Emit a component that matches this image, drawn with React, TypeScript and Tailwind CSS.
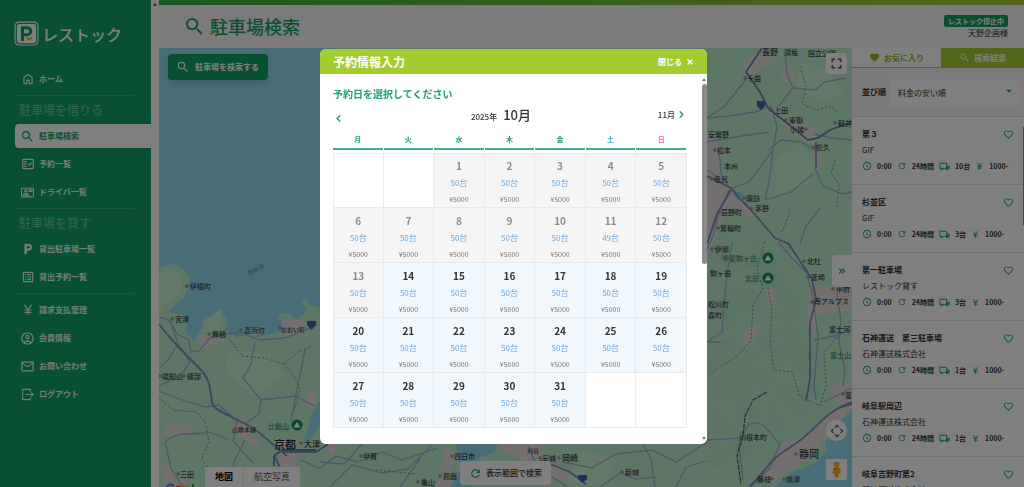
import { useState } from "react";
import type { ReactNode } from "react";
import {
  MdArrowDropDown,
  MdCurrencyYen,
  MdFavorite,
  MdFavoriteBorder,
  MdFullscreen,
  MdLocalParking,
  MdOutlineAccountCircle,
  MdOutlineContactMail,
  MdOutlineEmail,
  MdOutlineFactCheck,
  MdOutlineListAlt,
  MdOutlineLocalShipping,
  MdRefresh,
  MdSchedule,
  MdSearch,
} from "react-icons/md";
import { ChevronLeft, ChevronRight, ChevronsRight, X } from "lucide-react";

const HomeIcon = () => (
  <svg viewBox="0 -960 960 960" className="size-[14px]" fill="currentColor">
    <path d="M240-200h120v-240h240v240h120v-360L480-740 240-560v360Zm-80 80v-480l320-240 320 240v480H520v-240h-80v240H160Z" />
  </svg>
);

const LogoutIcon = () => (
  <svg viewBox="0 0 24 24" className="size-[13px]" fill="none" stroke="currentColor" strokeWidth="2">
    <path d="M17 7V2.500H3v19h14V17M9 12h13M18.500 8l4 4-4 4" />
  </svg>
);

const Logo = () => (
  <svg viewBox="0 0 50 50" className="size-[25px]">
    <rect x="1" y="1" width="48" height="48" rx="9" fill="#fff" />
    <rect x="4.500" y="4.500" width="41" height="41" rx="6" fill="none" stroke="#0ca263" strokeWidth="2.500" />
    <path d="M17 40V13.500h9.500a7 7 0 0 1 0 14H17" fill="none" stroke="#0ca263" strokeWidth="6" />
    <path d="M24 32c1 9 9 9 14 1-3-3-5-2-7 2-1-3-3-4-7-3z" fill="#e8cf1f" />
  </svg>
);

type NavItem = { label: string; icon: ReactNode; active?: boolean };

const navGroups: { heading?: string; items: NavItem[] }[] = [
  { items: [{ label: "ホーム", icon: <HomeIcon /> }] },
  {
    heading: "駐車場を借りる",
    items: [
      { label: "駐車場検索", icon: <MdSearch size={15} />, active: true },
      { label: "予約一覧", icon: <MdOutlineFactCheck size={14} /> },
      { label: "ドライバ一覧", icon: <MdOutlineContactMail size={13} /> },
    ],
  },
  {
    heading: "駐車場を貸す",
    items: [
      { label: "貸出駐車場一覧", icon: <MdLocalParking size={14} /> },
      { label: "貸出予約一覧", icon: <MdOutlineListAlt size={14} /> },
    ],
  },
  {
    items: [
      { label: "請求支払管理", icon: <MdCurrencyYen size={14} /> },
      { label: "会員情報", icon: <MdOutlineAccountCircle size={15} /> },
      { label: "お問い合わせ", icon: <MdOutlineEmail size={15} /> },
      { label: "ログアウト", icon: <LogoutIcon /> },
    ],
  },
];

const parkings = [
  { name: "第３", owner: "GIF", count: 10 },
  { name: "杉並区", owner: "GIF", count: 3 },
  { name: "第一駐車場", owner: "レストック貸す", count: 3 },
  { name: "石神運送　第三駐車場", owner: "石神運送株式会社", count: 1 },
  { name: "岐阜駅周辺", owner: "石神運送株式会社", count: 1 },
  { name: "岐阜吉野町第2", owner: "石神運送株式会社", count: 1 },
];

const weekdays = [
  { label: "月", color: "text-[#1fa26c]" },
  { label: "火", color: "text-[#1fa26c]" },
  { label: "水", color: "text-[#1fa26c]" },
  { label: "木", color: "text-[#1fa26c]" },
  { label: "金", color: "text-[#1fa26c]" },
  { label: "土", color: "text-[#57a5d6]" },
  { label: "日", color: "text-[#f0707c]" },
];

// October 2025 starts on a Wednesday
const weeks = Array.from({ length: 5 }, (_, w) =>
  Array.from({ length: 7 }, (_, d) => {
    const day = w * 7 + d - 1;
    return day >= 1 && day <= 31 ? day : null;
  })
);

// [label, x, y, size]
const places: [string, number, number, number][] = [
  ["伊根町", 190, 289, 7],
  ["宮津", 175, 322, 7],
  ["舞鶴", 212, 337, 7],
  ["高浜町", 244, 333, 7],
  ["おおい町", 281, 332, 6],
  ["福知山", 162, 379, 7],
  ["綾部", 187, 379, 7],
  ["大津", 304, 447, 8],
  ["三田", 180, 477, 7],
  ["山陰本線", 232, 432, 6],
  ["甲賀", 363, 459, 7],
  ["四日市", 454, 459, 7],
  ["亀山", 421, 485, 7],
  ["鈴鹿", 443, 479, 7],
  ["刈谷", 527, 453, 6],
  ["安城", 542, 461, 7],
  ["岡崎", 562, 461, 8],
  ["新城", 625, 475, 7],
  ["長野", 762, 55, 8],
  ["須坂", 784, 55, 7],
  ["国立公園", 808, 56, 7],
  ["千曲", 747, 81, 7],
  ["上田", 774, 113, 7],
  ["東御", 789, 123, 7],
  ["小諸", 790, 132, 7],
  ["軽井", 838, 126, 7],
  ["安曇野", 708, 137, 7],
  ["松本", 717, 153, 7],
  ["本州", 724, 169, 7],
  ["佐久", 816, 150, 7],
  ["塩尻", 714, 182, 7],
  ["諏訪", 746, 201, 7],
  ["茅野", 755, 211, 7],
  ["辰野町", 721, 215, 7],
  ["箕輪町", 720, 231, 7],
  ["伊那", 715, 252, 7],
  ["北杜", 807, 264, 7],
  ["韮崎", 811, 280, 7],
  ["駒ヶ根", 710, 276, 7],
  ["甲府", 836, 292, 7],
  ["松川町", 708, 307, 7],
  ["森町", 708, 318, 7],
  ["南アルプス", 814, 304, 7],
  ["富士河", 829, 332, 7],
  ["富", 845, 398, 7],
  ["川根本町", 739, 440, 7],
  ["静岡", 799, 458, 10],
  ["藤枝", 757, 482, 7],
  ["焼津", 786, 482, 7],
];

const towns: [number, number][] = [
  [187, 286], [172, 319], [209, 334], [241, 330], [280, 328], [160, 376], [184, 376], [301, 443],
  [178, 474], [361, 456], [452, 456], [418, 482], [440, 476], [540, 458], [559, 458], [622, 472],
  [759, 52], [745, 78], [771, 110], [786, 120], [806, 129], [835, 123], [715, 150], [712, 179],
  [744, 198], [751, 209], [719, 212], [718, 228], [712, 249], [804, 261], [809, 277], [833, 289],
  [812, 302], [843, 394], [796, 454], [772, 479], [784, 479], [814, 147],
];

const parks: [number, number][] = [[297, 425], [768, 258], [768, 278]];

function MapCanvas() {
  return (
    <svg viewBox="159 48 693 439" preserveAspectRatio="xMidYMid slice" className="block size-full">
      <defs>
        <filter id="relief" x="0" y="0" width="100%" height="100%">
          <feTurbulence type="fractalNoise" baseFrequency="0.045 0.07" numOctaves="3" seed="8" />
          <feColorMatrix values="0 0 0 0 0.3  0 0 0 0 0.6  0 0 0 0 0.4  0 1.4 0 0 -0.56" />
        </filter>
        <clipPath id="mountains">
          <path d="M707 220L760 230 800 300 820 340V400L790 440 707 470z" />
        </clipPath>
      </defs>
      <rect x="159" y="48" width="693" height="439" fill="#90daee" />
      <path
        d="M159 269l9-4 8-1 7 5 7 9-2 12-5 9-8 6-7 7 13 2 7 8-3 9 9 10 6-9 4-9 18-10 5 5-2 11 11 8 14-3 11-10 2 6-10 8 18-4 9-3 12-5-4-5-10-1 3-7 9 1 6 6 7-5 4-7-5-5 2-5 7 7 7 3 9-5h8V48h520V487H159z"
        fill="#bdeccb"
      />
      <g fill="#cdf2d3">
        <path d="M159 275c15-10 27 2 22 14s-18 12-22 24z" />
        <path d="M202 322l20-14-3 20-12 5zM230 350l40 4 14 22-30 20-30-24zM580 450l35 8-10 28-40-4z" />
        <path d="M775 160l25-18 18 20-10 22-32 10zM800 62l30 8 14 24-26 8-22-18z" />
      </g>
      <rect x="159" y="48" width="693" height="439" filter="url(#relief)" clipPath="url(#mountains)" opacity="0.4" />

      {/* Built-up areas */}
      <g fill="#e6dfdc">
        <path d="M282 320l22 0 2 13-24 2zM195 340l8-6 24 4-22 12zM166 424l28 2-10 9-20-1zM232 416l14 12 14 14-4 6-22-16z" />
        <path d="M275 441l14-2 8 12-2 20-10 16h-12l6-22zM312 388l6 10-6 12-6-8zM160 462l24 18 4 7h-24z" />
        <path d="M326 444h16l-10 12zM445 446l10 6-6 24 6 11h-20l6-22zM500 444h38l6 18 22 10 4 12-28-8-26-20-16-6z" />
        <path d="M708 138l8-2 4 28 8 22 16 18 14 10-8 4-20-14-16 36-8 18zM744 62l18-12 18 4-24 20-10 8z" />
        <path d="M758 98l18 8 10 14 28 8 6 20 2 16-8 2-2-20-24-18-26-20zM780 72l14-2 2 10-12 2z" />
        <path d="M766 288l8 0-1 18-6-4zM752 326l10-4-6 14-10 14-3-14zM808 272l10 14 34 4v20l-34 4-4 22-8-16 4-20z" />
        <path d="M782 442l22-6 32-28 16-8v10l-22 24-20 24-22 14-16 10h-12l14-22zM826 390l14-8 12 4v20h-12z" />
      </g>

      {/* Bays and lakes */}
      <g fill="#90daee">
        <path d="M320 400l-8 14-6 20-3 8 8-4 9-14zM455 444h42l-2 8-16 6-8 14 2 15h-22l10-20z" />
        <path d="M852 409l-19 20-8 14 2 8-12 12-24 10-16 14h77z" />
        <path d="M732 194l8-3 4 5-6 4zM833 335l6-2 1 5-6 2z" />
      </g>

      {/* Local roads */}
      <g fill="none" stroke="#9fb0cc" strokeWidth="1.300">
        <path d="M159 318c10-2 14 8 18 16l12 6 2 12 8-1 12-14 28-5 20 8 26-2 30-12" />
        <path d="M170 320l8 24 12 18-10 14-21 10M178 344l-10 16-9 8M159 391l20 8 26 8 14-2 18 16-4 20 20 22" />
        <path d="M255 342l-4 22-8 14 18 22-2 14-14 10M261 400l34-4 20 10M305 350l-8 40-6 30" />
        <path d="M165 442c12-12 28-6 44-10l20 8M165 442l6 26 12 19M245 440l-12 24 10 16M300 460l20 8 16-12 22 6 24-10 20 8 36-12" />
        <path d="M320 462l24 2 18-20M330 487l22-22 30 8 26-4 24-24M400 487l20-28" />
        <path d="M528 446l10 22 30 19M562 462l30 6 24-14 36-4 24 12 31-20M600 487l20-14 16 6 20-2M655 487l-4-28-8-15M676 487l10-20 20-6" />
        <path d="M707 118l18-12 22-28M707 118l22-2 26-4 16-6M785 54l2 20 6 14 22 2 10-8 20-4M793 88l-14 18" />
        <path d="M707 142l22-4 40-6M771 106l6 20-4 24-4 32-4 18M769 150l12-10 20 2 14 8M733 188l16-6 24-32" />
        <path d="M719 150l2 24 8 14M707 170l12 8M729 190l-10 22-6 24-6 14M765 200l26-8 22-18M815 168l8 18 20 8 9-2" />
        <path d="M778 242l12 14 16 16 6 20 6 44-4 50 2 14M732 242l-6 40-4 50-15 10M852 330l-18 6-20 4M852 140l-20-2-18-4" />
        <path d="M820 208l-14 18-6 18M837 292l4 30-2 20 6 28-2 16" />
        <path d="M740 438c4-14 18-20 26-10l14 16-10 24-20 19M740 438l-33 2M749 422l-10 24 4 34M824 402l28-14M707 342l14 0" />
      </g>

      {/* Motorways */}
      <g fill="none" stroke="#8088bf" strokeWidth="1.800">
        <path d="M159 324c10 14 26 30 40 44s10 24 14 38c14 12 36 16 50 30l24 20" />
        <path d="M274 455l6 12 2 20M282 452h34l12-8M707 176l24 12 10 12 10 10 24 28 14 6" />
        <path d="M731 190l-14 24-10 30M788 243l24 36 4 20-6 24 0 56-4 22M838 408l14-4" />
        <path d="M852 402c-30 10-36 30-60 44s-28 28-42 40" />
        <path d="M540 460l30 12 16 12M816 142l0 26" />
      </g>
      <g fill="none" stroke="#4f8fa0" strokeWidth="1.800">
        <path d="M762 48l-16 24 14 20 8 16 20 16 20 16 10-2 12-8 22-8M274 466v-10l8-6h34" />
      </g>

      {/* Prefectural borders */}
      <g fill="none" stroke="#7d9184" strokeWidth="1" strokeDasharray="2 2">
        <path d="M230 340l12 16 22 2 20 6 14-12 14-6M284 364l10 12 6 12-6 24M159 398l14 12 24 2 8 10M205 422l4 20-8 18 14 14M376 470l40 4" />
        <path d="M800 66l6 20-4 18 14 6 14-4 8 6M835 160l-4 14 8 10-2 24M790 212l-8 20M765 242l-8 26 6 20-10 18-2 34-14 16-30 20" />
        <path d="M768 288l4 20-2 36 4 26 18 2 8 24 20 10 6-20-2-34 14-16" />
      </g>
      <path d="M767 392l-14 8-8 16-2 20-6 20 4 28" fill="none" stroke="#53605a" strokeWidth="1.200" strokeDasharray="5 1" />

      {/* Route shields */}
      <g fill="#3a62b8">
        <path d="M757 101h8v5l-4 4-4-4zM307 321h9v4l-4.500 5-4.500-5zM578 475h9v4l-4.500 4-4.500-4z" />
      </g>

      <g fill="#fff" stroke="#555" strokeWidth="0.800">
        {towns.map(([x, y]) => (
          <circle key={`${x}-${y}`} cx={x} cy={y} r="1.200" />
        ))}
      </g>
      <g fill="#3c4347" fontWeight="500">
        {places.map(([label, x, y, size]) => (
          <text key={label} x={x} y={y} fontSize={size}>
            {label}
          </text>
        ))}
        <text x="274" y="449" fontSize="11" fill="#222">京都</text>
      </g>
      <g fill="#3d8c66" fontWeight="500">
        <text x="268" y="429" fontSize="7">比叡山</text>
        <text x="722" y="261" fontSize="7">甲斐駒ヶ岳</text>
        <text x="745" y="281" fontSize="7">北岳</text>
        <text x="830" y="358" fontSize="7">富士山</text>
      </g>
      <text x="249" y="276" fontSize="6" fill="#3f9fb5" transform="rotate(-28 249 276)">若狭湾</text>
      {parks.map(([x, y]) => (
        <g key={`${x}-${y}`}>
          <circle cx={x} cy={y} r="5.500" fill="#12935c" />
          <path d={`M${x - 3.5} ${y + 2.5}l3.500-5.500 3.500 5.500z`} fill="#fff" />
        </g>
      ))}
    </svg>
  );
}

function Sidebar() {
  return (
    <aside className="flex shrink-0 bg-white">
      <div className="w-[151px] bg-[#10a162] pt-[21px] text-white">
        <a href="#" className="mb-[21px] ml-[14px] flex h-[25px] items-center gap-[3px]">
          <Logo />
          <span className="text-[16px] leading-none font-medium">レストック</span>
        </a>
        <nav className="flex flex-col gap-1 pl-[15px]">
          {navGroups.map((group, i) => (
            <div key={i} className="flex flex-col gap-1">
              {i > 0 && <hr className="mr-4 border-[#35ae7b]" />}
              {group.heading && (
                <h2 className="h-5 pl-1 text-[12px] leading-5 text-[#6fc9a1]">{group.heading}</h2>
              )}
              {group.items.map((item) => (
                <a
                  key={item.label}
                  href="#"
                  className={
                    item.active
                      ? "flex h-6 items-center gap-1 rounded-l pl-[5px] text-[8px] font-bold text-[#10a162] bg-white"
                      : "flex h-6 items-center gap-1 rounded-l pl-[5px] text-[8px] font-bold text-[#e8f8f0]"
                  }
                >
                  <span className="flex w-[15px] justify-center">{item.icon}</span>
                  {item.label}
                </a>
              ))}
            </div>
          ))}
        </nav>
      </div>
      <div className="flex w-2 justify-center pt-[3px]">
        <span className="size-0 border-x-2 border-b-3 border-x-transparent border-b-[#666]" />
      </div>
    </aside>
  );
}

function ParkingList() {
  return (
    <section className="relative w-[172px] shrink-0 overflow-hidden bg-white text-[#333]">
      <div className="flex h-5 border-b border-[#a3cc33] text-[8px] font-bold">
        <button type="button" className="flex w-[89px] items-center justify-center gap-1 text-[#8fb81e]">
          <MdFavorite size={11} />
          お気に入り
        </button>
        <button type="button" className="flex flex-1 items-center justify-center gap-1 bg-[#a3cc33] text-white">
          <MdSearch size={11} />
          検索結果
        </button>
      </div>
      <div className="flex h-12 items-center gap-1 bg-[#f4f4f4] pr-1 pl-[10px]">
        <label htmlFor="sort" className="w-6 shrink-0 text-[8px] font-bold whitespace-nowrap">
          並び順
        </label>
        <div className="relative flex-1">
          <select id="sort" className="h-7 w-full appearance-none rounded-sm bg-white px-2 text-[8px]">
            <option>料金の安い順</option>
            <option>距離の近い順</option>
          </select>
          <MdArrowDropDown size={14} className="pointer-events-none absolute top-[7px] right-1 text-[#10a162]" />
        </div>
      </div>
      <ul>
        {parkings.map((p) => (
          <li key={p.name} className="h-[68px] border-t border-[#dedede] pt-[9px] pr-[10px] pl-[10px]">
            <div className="flex h-4 items-center justify-between">
              <h3 className="text-[8px] font-bold">{p.name}</h3>
              <button type="button" aria-label="お気に入り" className="text-[#10a162]">
                <MdFavoriteBorder size={11} />
              </button>
            </div>
            <p className="text-[8px] leading-4">{p.owner}</p>
            <div className="flex h-4 items-center gap-[5px] text-[7px] font-bold">
              <MdSchedule size={10} className="text-[#10a162]" />
              <span>0:00</span>
              <MdRefresh size={10} className="text-[#10a162]" />
              <span>24時間</span>
              <MdOutlineLocalShipping size={11} className="text-[#10a162]" />
              <span>{p.count}台</span>
              <MdCurrencyYen size={9} className="text-[#10a162]" />
              <span>1000-</span>
            </div>
          </li>
        ))}
      </ul>
      <span className="absolute top-[79px] right-0 h-[98px] w-px bg-[#888]" />
    </section>
  );
}

function MapArea() {
  return (
    <section className="relative min-w-0 flex-1 overflow-hidden">
      <MapCanvas />
      <button
        type="button"
        className="absolute top-[6px] left-[9px] flex h-[26px] w-[100px] items-center gap-1 rounded bg-[#10a162] pl-2 text-[8px] font-bold text-white shadow-md"
      >
        <MdSearch size={14} />
        <span className="pl-px">駐車場を検索する</span>
      </button>
      <button type="button" aria-label="全画面" className="absolute top-[5px] right-[5px] flex size-[21px] items-center justify-center rounded-xs bg-white text-[#555]">
        <MdFullscreen size={17} />
      </button>
      <button type="button" aria-label="一覧を閉じる" className="absolute top-[207px] right-0 flex h-8 w-5 items-center justify-center rounded-l bg-white text-[#10a162]">
        <ChevronsRight size={10} strokeWidth={3} />
      </button>
      <button type="button" aria-label="地図を移動" className="absolute right-[5px] bottom-[46px] flex size-[21px] items-center justify-center rounded-full bg-white">
        <svg viewBox="0 0 20 20" className="size-[14px]" fill="none" stroke="#666" strokeWidth="2">
          <path d="M7 5l3-3 3 3M7 15l3 3 3-3M5 7l-3 3 3 3M15 7l3 3-3 3" />
        </svg>
      </button>
      <button type="button" aria-label="ストリートビュー" className="absolute right-[5px] bottom-[7px] flex size-[21px] items-center justify-center bg-white">
        <svg viewBox="0 0 16 24" className="h-[17px]" fill="#f2b31b">
          <circle cx="8" cy="5" r="4" />
          <path d="M3 11c0-3 10-3 10 0l1 6-3 1v5H5v-5l-3-1z" />
          <path d="M4 9.500c2 2 6 2 8 0l-1 2H5z" fill="#b97c10" />
        </svg>
      </button>
      <div className="absolute bottom-0 left-[46px] flex h-5 bg-white text-[9px]">
        <button type="button" className="border-r border-[#e4e4e4] px-[10px] font-bold text-black">地図</button>
        <button type="button" className="px-[10px] text-[#565656]">航空写真</button>
      </div>
      <svg viewBox="0 0 30 12" className="absolute -bottom-2 left-[6px] w-[30px]" fill="none" strokeWidth="2">
        <path d="M9 3a4.500 4.500 0 1 0 0 6V6H5.500" stroke="#4285f4" />
        <circle cx="13" cy="6" r="2.500" stroke="#ea4335" />
        <circle cx="19" cy="6" r="2.500" stroke="#fbbc05" />
        <path d="M25 4v7M25 6a2 2 0 1 0 0 1" stroke="#4285f4" />
        <path d="M28 1v8" stroke="#34a853" />
      </svg>
      <div className="absolute inset-x-0 bottom-[2px] flex justify-center">
        <button type="button" className="flex h-6 items-center gap-1 rounded bg-white px-[9px] text-[8px] font-medium text-[#333]">
          <MdRefresh size={13} className="text-[#10a162]" />
          表示範囲で検索
        </button>
      </div>
    </section>
  );
}

function Calendar({ selected, onSelect }: { selected: number | null; onSelect: (day: number) => void }) {
  return (
    <table className="w-full table-fixed border-separate border-spacing-0 text-center">
      <thead>
        <tr>
          {weekdays.map((w) => (
            <th key={w.label} scope="col" className="p-0 pb-[3px]">
              <div className={`mr-px h-[19px] border-b-2 border-[#3fb085] text-[7px] leading-4 font-bold ${w.color}`}>{w.label}</div>
            </th>
          ))}
        </tr>
      </thead>
      <tbody>
        {weeks.map((week, i) => (
          <tr key={i}>
            {week.map((day, j) => {
              const edge = `${i === 0 ? "border-t" : ""} ${j === 0 ? "border-l" : ""}`;
              if (!day) {
                return <td key={j} className={`h-[55px] border-r border-b border-[#e9ebec] p-0 ${edge}`} />;
              }
              const open = day >= 14;
              return (
                <td
                  key={j}
                  className={`h-[55px] border-r border-b border-[#e6eaec] p-0 ${edge} ${open ? "bg-[#f0f8fe]" : "bg-[#f5f5f5]"}`}
                >
                  <button
                    type="button"
                    disabled={!open}
                    aria-pressed={selected === day}
                    onClick={() => onSelect(day)}
                    className="block w-full pt-1"
                  >
                    <span className={`block text-[10px] leading-4 font-bold ${open ? "text-[#333]" : "text-[#8c8c8c]"}`}>
                      {day}
                    </span>
                    <span className="block pt-px text-[8px] leading-4 text-[#6fa8dc]">{day === 11 ? 49 : 50}台</span>
                    <span className="block text-[7px] leading-4 text-[#777]">¥5000</span>
                  </button>
                </td>
              );
            })}
          </tr>
        ))}
      </tbody>
    </table>
  );
}

function ReservationModal({ onClose }: { onClose: () => void }) {
  const [selected, setSelected] = useState<number | null>(null);

  return (
    <div className="fixed inset-0 z-10 flex items-start justify-center bg-black/50 pt-[49px] pl-[3px]">
      <div role="dialog" aria-label="予約情報入力" className="w-[387px] overflow-hidden rounded-md bg-white">
        <div className="flex h-[25px] items-center justify-between bg-[#a3cc33] px-[13px] text-white">
          <h2 className="text-[12px] font-bold">予約情報入力</h2>
          <button type="button" onClick={onClose} className="flex items-center gap-1 text-[8px] font-bold">
            閉じる
            <X size={8} strokeWidth={4} />
          </button>
        </div>
        <div className="flex">
          <div className="flex-1 pt-3 pr-[14px] pb-4 pl-[13px]">
            <h3 className="text-[10px] leading-4 font-bold text-[#1fa26c]">予約日を選択してください</h3>
            <div className="flex h-[29px] items-center justify-between text-[#333]">
              <button type="button" aria-label="前の月" className="pt-1 text-[#1fa26c]">
                <ChevronLeft size={11} strokeWidth={3} />
              </button>
              <div className="flex items-baseline gap-[6px] pb-1 font-medium">
                <span className="text-[8px]">2025年</span>
                <span className="text-[13px]">10月</span>
              </div>
              <button type="button" className="flex items-center gap-px pb-1 text-[8px] font-medium">
                11月
                <ChevronRight size={11} strokeWidth={3} className="text-[#1fa26c]" />
              </button>
            </div>
            <Calendar selected={selected} onSelect={setSelected} />
          </div>
          <div className="flex w-[6px] flex-col items-center justify-between py-1">
            <div className="flex flex-col items-center gap-[3px]">
              <span className="size-0 border-x-2 border-b-3 border-x-transparent border-b-[#777]" />
              <span className="h-[180px] w-[5px] rounded-full bg-[#8b8b8b]" />
            </div>
            <span className="size-0 border-x-2 border-t-3 border-x-transparent border-t-[#777]" />
          </div>
        </div>
      </div>
    </div>
  );
}

export default function App() {
  const [modalOpen, setModalOpen] = useState(true);

  return (
    <div className="flex h-screen overflow-hidden bg-white font-['Noto_Sans_CJK_JP','Noto_Sans',sans-serif]">
      <Sidebar />
      <div className="flex min-w-0 flex-1 flex-col">
        <div className="h-[5px] shrink-0 bg-linear-to-r from-[#38ac48] to-[#a6cb2e]" />
        <header className="flex h-[43px] shrink-0 items-center justify-between bg-[#f7f7f7] pr-4 pl-6">
          <h1 className="flex items-center gap-1 text-[18px] font-medium text-[#10a162]">
            <MdSearch size={23} />
            駐車場検索
          </h1>
          <div className="flex flex-col items-end">
            <span className="rounded-xs bg-[#10a162] px-1 text-[7px] leading-3 font-bold text-white">レストック停止中</span>
            <span className="text-[8px] leading-3 text-[#333]">天野企画様</span>
          </div>
        </header>
        <main className="flex min-h-0 flex-1">
          <MapArea />
          <ParkingList />
        </main>
      </div>
      {modalOpen && <ReservationModal onClose={() => setModalOpen(false)} />}
    </div>
  );
}
